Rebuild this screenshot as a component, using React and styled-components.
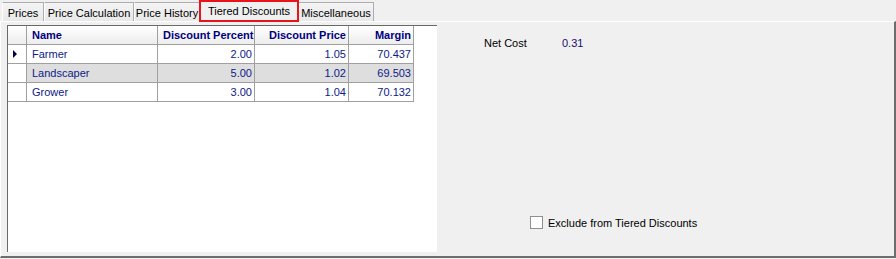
import styled, { createGlobalStyle } from "styled-components";

const GlobalStyle = createGlobalStyle`
  html, body {
    margin: 0;
    padding: 0;
    background: #f0f0f0;
  }
  body {
    font-family: "Liberation Sans", Arial, sans-serif;
    font-size: 11px;
    color: #000;
  }
`;

const tabs = [
  { label: "Prices", width: 42 },
  { label: "Price Calculation", width: 90 },
  { label: "Price History", width: 66 },
  { label: "Tiered Discounts", width: 100, active: true },
  { label: "Miscellaneous", width: 76 },
];

const rows = [
  { name: "Farmer", pct: "2.00", price: "1.05", margin: "70.437", current: true },
  { name: "Landscaper", pct: "5.00", price: "1.02", margin: "69.503", selected: true },
  { name: "Grower", pct: "3.00", price: "1.04", margin: "70.132" },
];

const cols = "19px 131px 97px 94px 65px";

export default function App() {
  return (
    <>
      <GlobalStyle />
      <Window>
        <TabStrip>
          {tabs.map((t) => (
            <Tab key={t.label} $w={t.width} $active={t.active}>
              {t.label}
            </Tab>
          ))}
        </TabStrip>
        <Panel>
          <Grid>
            <HeaderRow>
              <RowHead $header />
              <HeadCell>Name</HeadCell>
              <HeadCell $right>Discount Percent</HeadCell>
              <HeadCell $right>Discount Price</HeadCell>
              <HeadCell $right>Margin</HeadCell>
            </HeaderRow>
            {rows.map((r) => (
              <Row key={r.name} $selected={r.selected}>
                <RowHead>{r.current && <Arrow />}</RowHead>
                <Cell>{r.name}</Cell>
                <Cell $right>{r.pct}</Cell>
                <Cell $right>{r.price}</Cell>
                <Cell $right>{r.margin}</Cell>
              </Row>
            ))}
          </Grid>
          <Side>
            <Field>
              <FieldLabel>Net Cost</FieldLabel>
              <FieldValue>0.31</FieldValue>
            </Field>
            <CheckRow>
              <CheckBox />
              <span>Exclude from Tiered Discounts</span>
            </CheckRow>
          </Side>
        </Panel>
      </Window>
    </>
  );
}

const Window = styled.div`
  width: 896px;
  height: 259px;
  display: flex;
  flex-direction: column;
  background: #f0f0f0;
`;

const TabStrip = styled.div`
  display: flex;
  align-items: flex-end;
  height: 21px;
  padding-left: 2px;
  position: relative;
  z-index: 1;
`;

const Tab = styled.div`
  box-sizing: border-box;
  width: ${(p) => p.$w}px;
  height: ${(p) => (p.$active ? 22 : 19)}px;
  margin: ${(p) => (p.$active ? "0 -1px 0 -1px" : "0")};
  align-self: ${(p) => (p.$active ? "flex-start" : "auto")};
  padding-top: ${(p) => (p.$active ? 3 : 4)}px;
  text-align: center;
  white-space: nowrap;
  overflow: hidden;
  background: ${(p) => (p.$active ? "#f0f0f0" : "linear-gradient(#f4f4f4, #e8e8e8)")};
  border: 1px solid #adadad;
  border-bottom: none;
  border-left-color: #fff;
  ${(p) =>
    p.$active &&
    `
    border: 2px solid #e8141b;
    position: relative;
    z-index: 2;
  `}
`;

const Panel = styled.div`
  flex: 1;
  display: flex;
  box-sizing: border-box;
  border-top: 1px solid #fff;
  border-left: 1px solid #fff;
  border-right: 2px solid #6d6d6d;
  border-bottom: 2px solid #6d6d6d;
  padding: 3px 0 4px 6px;
  margin-bottom: 1px;
`;

const Grid = styled.div`
  width: 430px;
  background: #fff;
  border-top: 1px solid #696969;
  border-left: 1px solid #696969;
  box-sizing: border-box;
`;

const HeaderRow = styled.div`
  display: grid;
  grid-template-columns: ${cols};
  width: max-content;
  height: 19px;
  background: linear-gradient(#ffffff, #ececec);
`;

const Row = styled.div`
  display: grid;
  grid-template-columns: ${cols};
  width: max-content;
  height: 19px;
  background: ${(p) => (p.$selected ? "#dedede" : "#fff")};
`;

const RowHead = styled.div`
  box-sizing: border-box;
  border-right: 1px solid #a0a0a0;
  border-bottom: 1px solid #a0a0a0;
  background: ${(p) => (p.$header ? "transparent" : "#fff")};
  display: flex;
  align-items: center;
  justify-content: center;
  padding-right: 4px;
`;

const Arrow = styled.span`
  width: 0;
  height: 0;
  border-top: 4px solid transparent;
  border-bottom: 4px solid transparent;
  border-left: 4px solid #000040;
`;

const HeadCell = styled.div`
  box-sizing: border-box;
  border-right: 1px solid #a0a0a0;
  border-bottom: 1px solid #a0a0a0;
  font-weight: bold;
  color: #000080;
  padding: 3px 2px 0 5px;
  text-align: ${(p) => (p.$right ? "right" : "left")};
  white-space: nowrap;
  overflow: hidden;
`;

const Cell = styled.div`
  box-sizing: border-box;
  border-right: 1px solid #a0a0a0;
  border-bottom: 1px solid #a0a0a0;
  color: #0c1a88;
  padding: 3px 2px 0 5px;
  text-align: ${(p) => (p.$right ? "right" : "left")};
  white-space: nowrap;
`;

const Side = styled.div`
  flex: 1;
  display: flex;
  flex-direction: column;
  justify-content: space-between;
  padding: 12px 0 23px 47px;
`;

const Field = styled.div`
  display: flex;
`;

const FieldLabel = styled.span`
  width: 78px;
`;

const FieldValue = styled.span`
  color: #1a0a6a;
`;

const CheckRow = styled.label`
  display: flex;
  align-items: center;
  gap: 5px;
  margin-left: 46px;
`;

const CheckBox = styled.span`
  width: 11px;
  height: 11px;
  border: 1px solid #8f8f8f;
  background: #fff;
  display: inline-block;
`;
